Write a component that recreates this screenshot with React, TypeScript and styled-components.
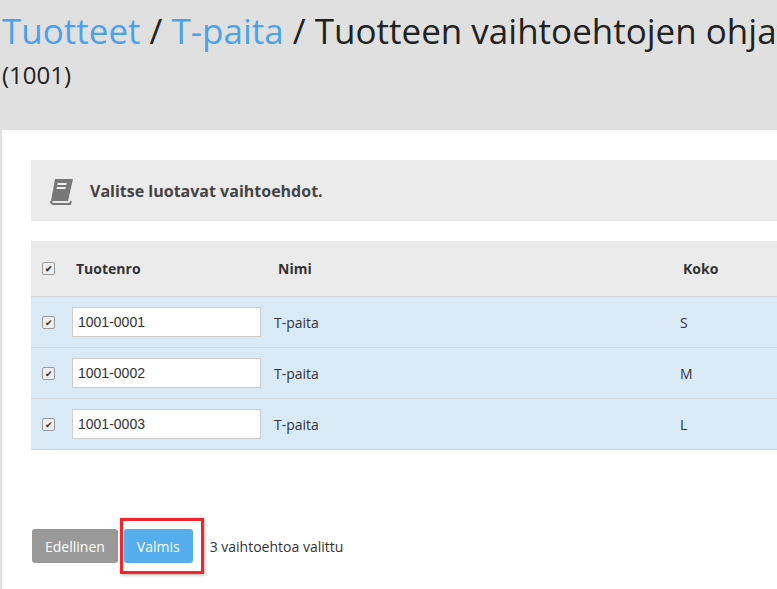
import React from "react";
import styled, { createGlobalStyle } from "styled-components";

const G = createGlobalStyle`
  body { margin:0; font-family:"Open Sans", sans-serif; background:#e0e0e0; overflow:hidden; }
`;
const Header = styled.div`height:130px; padding:7px 0 0 2px; box-sizing:border-box; color:#222; white-space:nowrap; overflow:hidden;`;
const Title = styled.div`font-size:35px; line-height:48px; a{color:#4aa3e8;}`;
const Sub = styled.div`font-size:24px; line-height:30px; margin-top:5px;`;
const Panel = styled.div`background:#fff; margin-left:2px; height:459px; padding:30px 0 0 29px; box-sizing:border-box;`;
const Info = styled.div`background:#ebebeb; height:61px; display:flex; align-items:center; gap:14px; padding-left:17px; font-weight:700; font-size:16px; color:#444;`;
const Table = styled.div`margin-top:20px; font-size:14px; color:#333;`;
const Row = styled.div<{ $head?: boolean }>`
  display:grid; grid-template-columns:41px 206px 405px 1fr; align-items:center;
  height:${p => p.$head ? 55 : 50}px; background:${p => p.$head ? "#ebebeb" : "#d9eaf6"};
  border-bottom:1px solid #d0d6dc; font-weight:${p => p.$head ? 700 : 400};
`;
const Cb = styled.span`width:11px; height:11px; border:1px solid #999; border-radius:2px; background:#eee; margin-left:11px; display:flex; align-items:center; justify-content:center; font-size:9px; line-height:1; color:#333;`;
const Input = styled.div`width:189px; height:30px; box-sizing:border-box; border:1px solid #ccc; background:#fff; display:flex; align-items:center; padding-left:5px; font-family:"Liberation Sans",sans-serif; font-size:14px; color:#333;`;
const Cell = styled.span<{ $pad?: number }>`margin-left:${p => p.$pad ?? 0}px;`;
const Footer = styled.div`display:flex; align-items:center; margin-top:68px; margin-left:1px; font-size:14px; color:#333;`;
const Btn = styled.div<{ $c: string }>`background:${p => p.$c}; color:#fff; height:34px; padding:0 13px; border-radius:3px; display:flex; align-items:center; font-size:14px;`;
const Mark = styled.div`border:3px solid #f0262c; padding:8px 8px 8px 1px; margin:0 6px 0 2px; box-shadow:1px 1px 3px rgba(0,0,0,.3);`;

const Book = () => (
  <svg width="28" height="28" viewBox="0 0 28 28">
    <path d="M7 2h18l-5 22H3z" fill="#777" />
    <path d="M3 24c0 2 1 3 3 3h16l1-3" fill="none" stroke="#777" strokeWidth="2" />
    <rect x="11" y="6" width="9" height="2" fill="#eee" transform="skewX(-12)" />
    <rect x="11" y="10" width="9" height="2" fill="#eee" transform="skewX(-12)" />
  </svg>
);

const rows = [["1001-0001", "S"], ["1001-0002", "M"], ["1001-0003", "L"]];

export default function App() {
  return (
    <>
      <G />
      <Header>
        <Title><a>Tuotteet</a> / <a>T-paita</a> / Tuotteen vaihtoehtojen ohjattu luonti</Title>
        <Sub>(1001)</Sub>
      </Header>
      <Panel>
        <Info><Book />Valitse luotavat vaihtoehdot.</Info>
        <Table>
          <Row $head><Cb>✔</Cb><Cell $pad={4}>Tuotenro</Cell><Cell>Nimi</Cell><span>Koko</span></Row>
          {rows.map(([n, k]) => (
            <Row key={n}><Cb>✔</Cb><Input>{n}</Input><Cell $pad={-4}>T-paita</Cell><Cell $pad={-3}>{k}</Cell></Row>
          ))}
        </Table>
        <Footer>
          <Btn $c="#999">Edellinen</Btn>
          <Mark><Btn $c="#55adee">Valmis</Btn></Mark>
          <span>3 vaihtoehtoa valittu</span>
        </Footer>
      </Panel>
    </>
  );
}
